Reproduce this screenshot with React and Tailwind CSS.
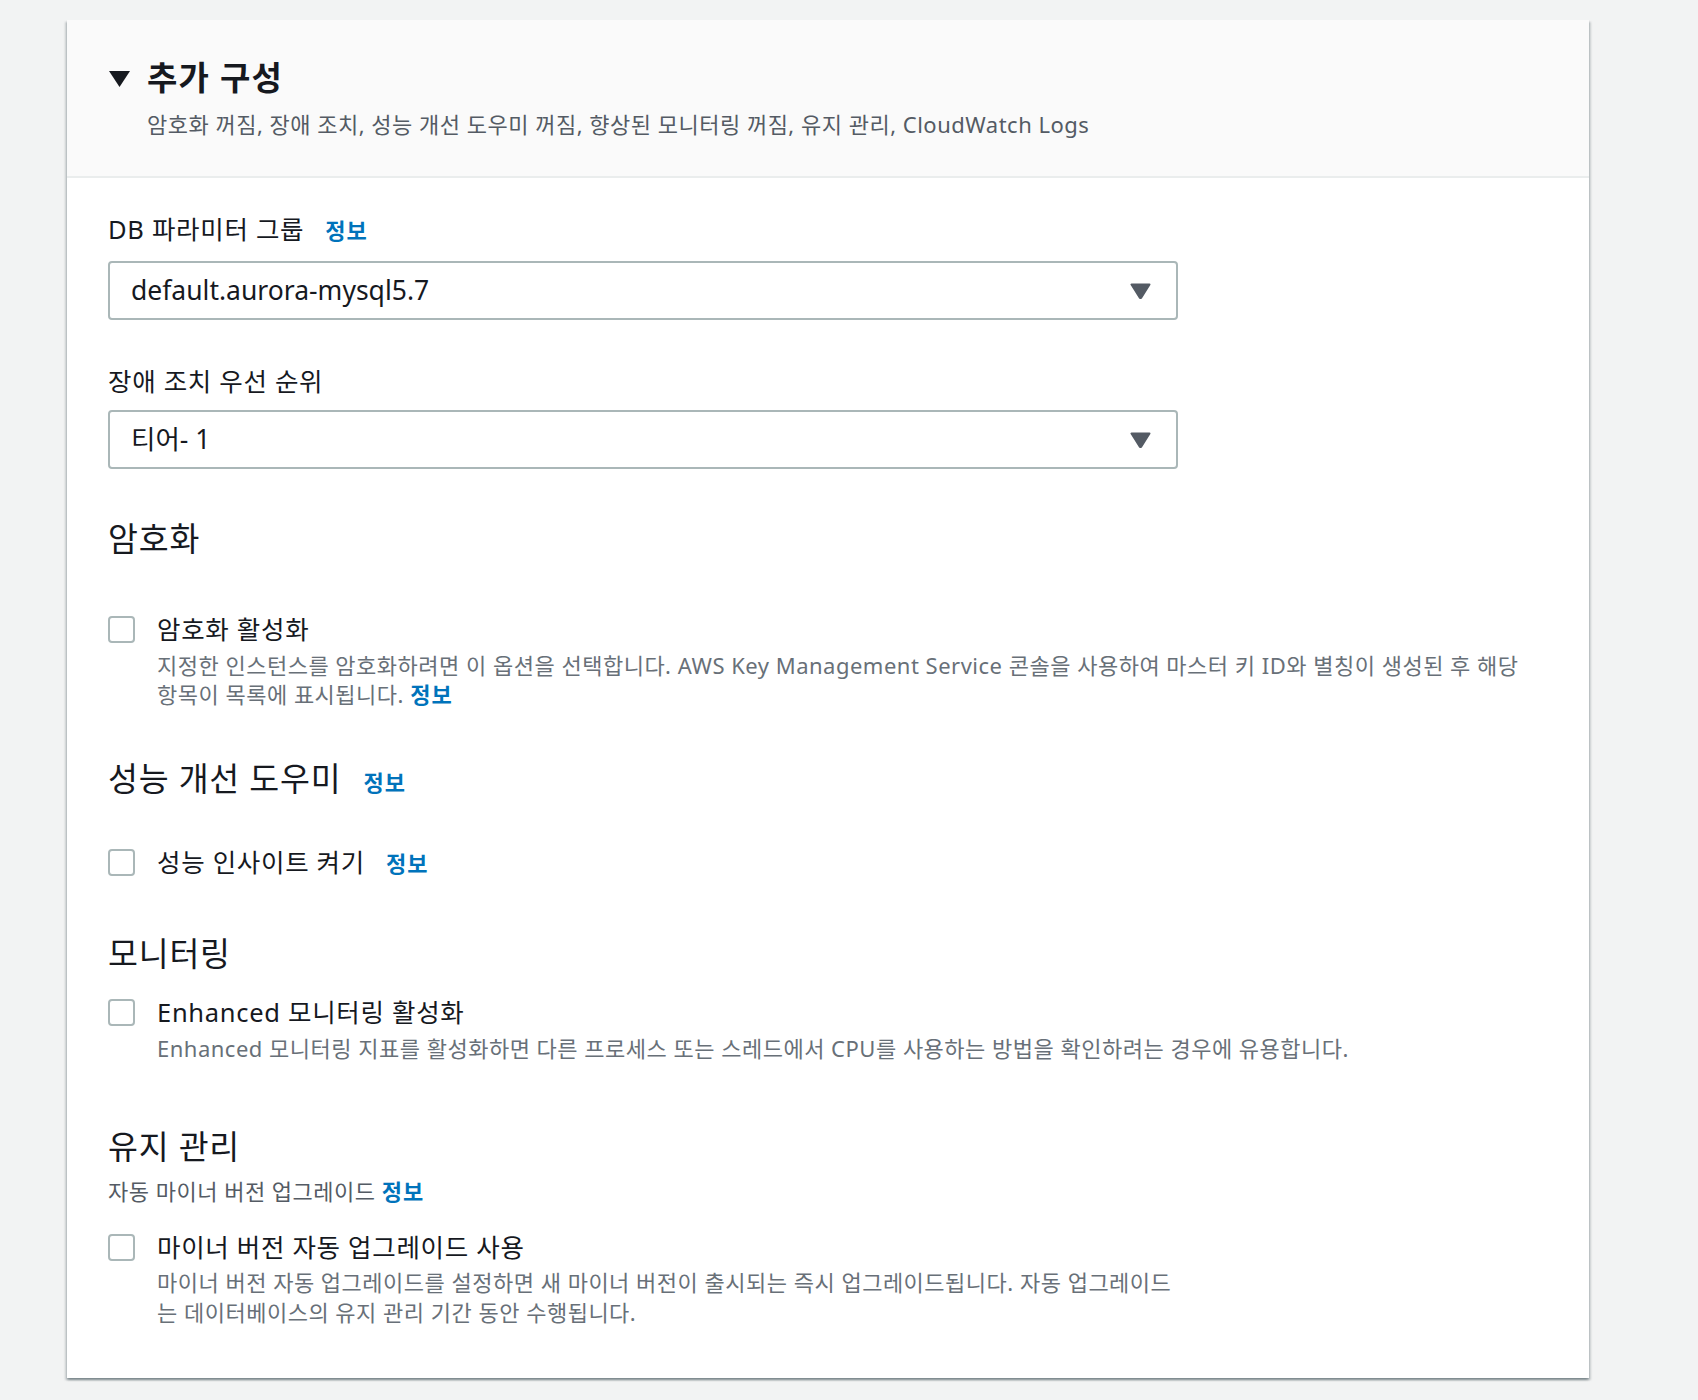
const FONT = {
  fontFamily: '"Noto Sans", "Noto Sans CJK KR", sans-serif',
};

function InfoLink({ className = "" }) {
  return (
    <a
      className={`inline-block align-baseline text-[22px] font-bold leading-none tracking-[1px] text-[#0073bb] ${className}`}
    >
      정보
    </a>
  );
}

function Caret() {
  return (
    <svg width="21" height="16" viewBox="0 0 21 16" className="shrink-0">
      <path
        d="M1.5 1.5 L19.5 1.5 L11.2 14.6 Q10.5 15.6 9.8 14.6 Z"
        fill="#545b64"
        stroke="#545b64"
        strokeWidth="2"
        strokeLinejoin="round"
      />
    </svg>
  );
}

function Select({ value, className = "" }) {
  return (
    <div
      className={`flex h-[59px] w-[1070px] items-center justify-between rounded-[4px] border-2 border-[#aab7b8] bg-white pl-[21px] pr-[25px] ${className}`}
    >
      <span className="text-[26.5px] leading-none text-[#16191f]">{value}</span>
      <Caret />
    </div>
  );
}

function Checkbox() {
  return (
    <span className="mt-[3px] block h-[27px] w-[27px] shrink-0 rounded-[4px] border-2 border-[#aab7b8] bg-white" />
  );
}

function CheckRow({ label, info, children, className = "" }) {
  return (
    <div className={`flex gap-[22px] ${className}`}>
      <Checkbox />
      <div>
        <div className="h-[32px] text-[25.5px] leading-[32px] tracking-[0.7px] text-[#16191f]">
          {label}
          {info && <InfoLink className="ml-[21px]" />}
        </div>
        {children}
      </div>
    </div>
  );
}

function SectionTitle({ children, info, className = "" }) {
  return (
    <div
      className={`h-[40px] text-[32.5px] leading-[40px] tracking-[0.8px] text-[#16191f] ${className}`}
    >
      {children}
      {info && <InfoLink className="ml-[22px]" />}
    </div>
  );
}

const DESC = "text-[22px] tracking-[0.5px] text-[#687078]";

export default function App() {
  return (
    <div className="min-h-[1400px] bg-[#f2f3f3] pt-[20px] pl-[67px]" style={FONT}>
      <div className="w-[1522px] bg-white shadow-[0_2px_2px_0_rgba(0,28,36,0.3),2px_2px_2px_0_rgba(0,28,36,0.15),-2px_2px_2px_0_rgba(0,28,36,0.15)]">
        {/* header */}
        <div className="border-b-2 border-[#eaeded] bg-[#fafafa] pl-[42px] pt-[38px] pb-[37px]">
          <div className="flex h-[40px] items-center gap-[17px]">
            <svg width="21" height="16" viewBox="0 0 21 16" className="mt-[1px]">
              <path d="M0 0 L21 0 L10.5 16 Z" fill="#16191f" />
            </svg>
            <h2 className="text-[33px] font-bold leading-[40px] tracking-[1.2px] text-[#16191f]">
              추가 구성
            </h2>
          </div>
          <p className="mt-[12px] pl-[38px] text-[22px] leading-[29px] tracking-[0.5px] text-[#545b64]">
            암호화 꺼짐, 장애 조치, 성능 개선 도우미 꺼짐, 향상된 모니터링 꺼짐, 유지 관리, CloudWatch Logs
          </p>
        </div>

        {/* body */}
        <div className="pl-[41px] pt-[35px] pb-[51px]">
          <div className="h-[32px] text-[25.5px] leading-[32px] tracking-[0.7px] text-[#16191f]">
            DB 파라미터 그룹
            <InfoLink className="ml-[21px]" />
          </div>
          <Select value="default.aurora-mysql5.7" className="mt-[16px]" />

          <div className="mt-[45px] h-[32px] text-[25.5px] leading-[32px] tracking-[0.7px] text-[#16191f]">
            장애 조치 우선 순위
          </div>
          <Select value="티어- 1" className="mt-[13px]" />

          <SectionTitle className="mt-[50px]">암호화</SectionTitle>
          <CheckRow label="암호화 활성화" className="mt-[54px]">
            <p className={`mt-[6px] leading-[29px] ${DESC}`}>
              지정한 인스턴스를 암호화하려면 이 옵션을 선택합니다. AWS Key Management Service 콘솔을 사용하여 마스터 키 ID와 별칭이 생성된 후 해당
              <br />
              항목이 목록에 표시됩니다. <InfoLink />
            </p>
          </CheckRow>

          <SectionTitle info className="mt-[50px]">
            성능 개선 도우미
          </SectionTitle>
          <CheckRow label="성능 인사이트 켜기" info className="mt-[47px]" />

          <SectionTitle className="mt-[56px]">모니터링</SectionTitle>
          <CheckRow label="Enhanced 모니터링 활성화" className="mt-[22px]">
            <p className={`mt-[6px] leading-[29px] ${DESC}`}>
              Enhanced 모니터링 지표를 활성화하면 다른 프로세스 또는 스레드에서 CPU를 사용하는 방법을 확인하려는 경우에 유용합니다.
            </p>
          </CheckRow>

          <SectionTitle className="mt-[64px]">유지 관리</SectionTitle>
          <p className="mt-[10px] h-[29px] text-[22px] leading-[29px] tracking-[0.5px] text-[#545b64]">
            자동 마이너 버전 업그레이드 <InfoLink />
          </p>
          <CheckRow label="마이너 버전 자동 업그레이드 사용" className="mt-[25px]">
            <p className={`mt-[4px] leading-[30px] ${DESC}`}>
              마이너 버전 자동 업그레이드를 설정하면 새 마이너 버전이 출시되는 즉시 업그레이드됩니다. 자동 업그레이드
              <br />
              는 데이터베이스의 유지 관리 기간 동안 수행됩니다.
            </p>
          </CheckRow>
        </div>
      </div>
    </div>
  );
}
